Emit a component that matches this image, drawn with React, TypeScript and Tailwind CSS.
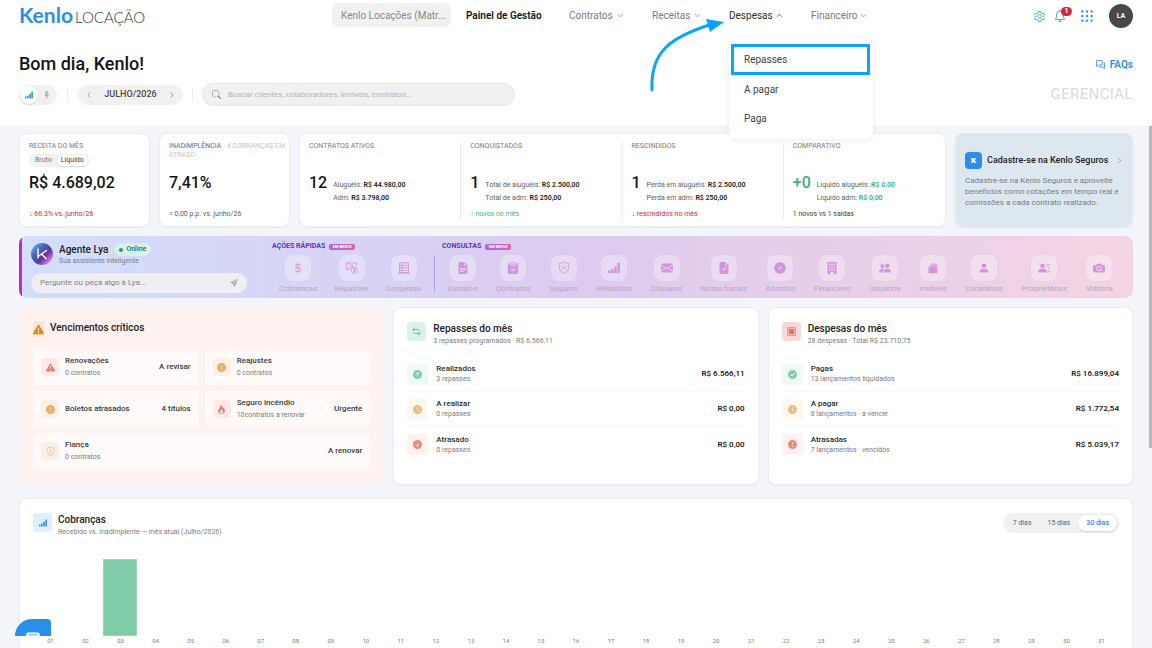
import React from "react";
import clsx from "clsx";
import type { IconType } from "react-icons";
import {
  BsArrowDownCircleFill,
  BsArrowUpCircleFill,
  BsBell,
  BsCameraFill,
  BsCheckCircleFill,
  BsChevronDown,
  BsChevronLeft,
  BsChevronRight,
  BsChevronUp,
  BsClipboardCheckFill,
  BsClockFill,
  BsCurrencyDollar,
  BsEnvelopeFill,
  BsExclamationCircleFill,
  BsExclamationTriangleFill,
  BsFileEarmarkCheckFill,
  BsFileEarmarkTextFill,
  BsFire,
  BsHouseFill,
  BsLightningFill,
  BsPatchCheckFill,
  BsPeopleFill,
  BsPersonFill,
  BsPersonLinesFill,
  BsSearch,
  BsSendFill,
  BsShieldCheck,
  BsShieldExclamation,
} from "react-icons/bs";

interface IconProps {
  className?: string;
  fill?: string;
}

const BarsIcon = ({ className, fill = "currentColor" }: IconProps) => (
  <svg viewBox="0 0 16 16" className={className} fill={fill}>
    <rect x="0" y="11" width="3.200" height="4" rx="0.8" />
    <rect x="4.200" y="9" width="3.200" height="6" rx="0.8" />
    <rect x="8.400" y="5.500" width="3.200" height="9.500" rx="0.8" />
    <rect x="12.600" y="1" width="3.200" height="14" rx="0.8" />
  </svg>
);

const BuildingIcon = ({ className, fill = "currentColor" }: IconProps) => (
  <svg viewBox="0 0 16 16" className={className} fill={fill} fillRule="evenodd">
    <path d="M2 0h12v16h-4v-3H6v3H2zM4 2v2h2V2zm3 0v2h2V2zm3 0v2h2V2zM4 5.500v2h2v-2zm3 0v2h2v-2zm3 0v2h2v-2zM4 9v2h2V9zm3 0v2h2V9zm3 0v2h2V9z" />
  </svg>
);

const MoneyIcon = ({ className, fill = "currentColor" }: IconProps) => (
  <svg viewBox="0 0 16 16" className={className} fill="none" stroke={fill} strokeWidth="1.1">
    <path d="M6 9.500H.8V1.200h13.500v3.500M.8 3.500 3 1.200M14.300 3.500 12 1.200M.8 7.500 3 9.500" />
    <circle cx="7" cy="5.200" r="1.800" />
    <circle cx="11.200" cy="10.800" r="4.200" />
    <path d="M12.700 9.300c-.8-.8-2.800-.6-2.800.5 0 1.400 2.800.8 2.800 2.100 0 1-2 1.300-2.900.4M11.300 8v5.600" />
  </svg>
);

const ListIcon = ({ className, fill = "currentColor" }: IconProps) => (
  <svg viewBox="0 0 16 16" className={className} fill="none" stroke={fill} strokeWidth="1.200">
    <path d="M2 1h12v13H2zM0 15h16M2 4.300h12M2 7.600h12M2 11h12M5.200 1v13" />
  </svg>
);

const SwapIcon = ({ className }: IconProps) => (
  <svg viewBox="0 0 16 16" className={className} fill="none" stroke="currentColor" strokeWidth="1.600">
    <path d="M4.500 1.500 1.500 4.500l3 3M1.500 4.500h9a3 3 0 0 1 2.500 2M11.500 8.500l3 3-3 3M14.500 11.500h-9a3 3 0 0 1-2.500-2" />
  </svg>
);

const SafeIcon = ({ className }: IconProps) => (
  <svg viewBox="0 0 16 16" className={className} fill="none" stroke="currentColor" strokeWidth="1.600">
    <rect x="1.500" y="1.500" width="13" height="13" />
    <rect x="4.500" y="4.500" width="7" height="7" fill="currentColor" />
  </svg>
);

const GearIcon = ({ className }: IconProps) => (
  <svg viewBox="0 0 24 24" className={className} fill="none" stroke="currentColor" strokeWidth="1.800" strokeLinejoin="round">
    <path d="M9.500 1h5l.7 3.200 2 1.200 3.100-1 2.500 4.300-2.400 2.200v2.200l2.400 2.200-2.500 4.300-3.100-1-2 1.200-.7 3.200h-5l-.7-3.200-2-1.200-3.100 1-2.500-4.300 2.400-2.200v-2.200L1.200 8.700l2.500-4.300 3.100 1 2-1.200z" />
    <circle cx="12" cy="12" r="4" />
  </svg>
);

const DotsIcon = ({ className }: IconProps) => (
  <svg viewBox="0 0 12 12" className={className} fill="currentColor">
    {[1.4, 6, 10.6].map((y) =>
      [1.4, 6, 10.6].map((x) => <circle key={`${x}-${y}`} cx={x} cy={y} r="1.200" />)
    )}
  </svg>
);

const ChatIcon = ({ className }: IconProps) => (
  <svg viewBox="0 0 16 16" className={className} fill="none" stroke="currentColor" strokeWidth="1.500" strokeLinejoin="round">
    <path d="M1 1h10v8H4.500L1 11.500zM13.500 5H15v10l-3-2.500H6.500V11" />
  </svg>
);

const LyaAvatar = () => (
  <svg viewBox="0 0 22 22" className="size-[22px] shrink-0" aria-hidden="true">
    <defs>
      <linearGradient id="lya-avatar" x1="0" y1="0" x2="1" y2="1">
        <stop offset="0%" stopColor="#7cc4ff" />
        <stop offset="35%" stopColor="#4a63b8" />
        <stop offset="60%" stopColor="#5b3796" />
        <stop offset="85%" stopColor="#d77bff" />
      </linearGradient>
    </defs>
    <circle cx="11" cy="11" r="11" fill="url(#lya-avatar)" />
    <path d="M7 6v9M15.500 7.500 7 13.500M10.500 11l4.500 4.500" stroke="#fff" strokeWidth="1.400" fill="none" strokeLinecap="round" />
  </svg>
);

const menuItems = ["Repasses", "A pagar", "Paga"];

const contractStats = [
  {
    label: "CONTRATOS ATIVOS",
    value: "12",
    lines: [["Aluguéis:", "R$ 44.980,00"], ["Adm:", "R$ 3.798,00"]],
    note: "",
    noteClass: "",
  },
  {
    label: "CONQUISTADOS",
    value: "1",
    lines: [["Total de aluguéis:", "R$ 2.500,00"], ["Total de adm:", "R$ 250,00"]],
    note: "↑ novos no mês",
    noteClass: "text-[#3dae82]",
  },
  {
    label: "RESCINDIDOS",
    value: "1",
    lines: [["Perda em aluguéis:", "R$ 2.500,00"], ["Perda em adm:", "R$ 250,00"]],
    note: "↓ rescindidos no mês",
    noteClass: "text-[#d3263f]",
  },
  {
    label: "COMPARATIVO",
    value: "+0",
    positive: true,
    lines: [["Líquido aluguéis:", "R$ 0,00"], ["Líquido adm:", "R$ 0,00"]],
    note: "1 novos vs 1 saídas",
    noteClass: "text-[#3c3c3c]",
  },
];

type AnyIcon = IconType | React.ComponentType<IconProps>;

const quickActions: { label: string; icon: AnyIcon }[] = [
  { label: "Cobranças", icon: BsCurrencyDollar },
  { label: "Repasses", icon: MoneyIcon },
  { label: "Despesas", icon: ListIcon },
];

const queries: { label: string; icon: AnyIcon }[] = [
  { label: "Extratos", icon: BsFileEarmarkTextFill },
  { label: "Contratos", icon: BsClipboardCheckFill },
  { label: "Seguros", icon: BsShieldCheck },
  { label: "Relatórios", icon: BarsIcon },
  { label: "Disparos", icon: BsEnvelopeFill },
  { label: "Notas fiscais", icon: BsFileEarmarkCheckFill },
  { label: "Acordos", icon: BsPatchCheckFill },
  { label: "Financeiro", icon: BuildingIcon },
  { label: "Usuários", icon: BsPeopleFill },
  { label: "Imóveis", icon: BsHouseFill },
  { label: "Locatários", icon: BsPersonFill },
  { label: "Proprietários", icon: BsPersonLinesFill },
  { label: "Vistoria", icon: BsCameraFill },
];

const dueItems = [
  { title: "Renovações", sub: "0 contratos", tag: "A revisar", icon: BsExclamationTriangleFill, tone: "bg-[#fde9e8] text-[#e37a70]" },
  { title: "Reajustes", sub: "0 contratos", tag: "", icon: BsExclamationCircleFill, tone: "bg-[#fcf0e6] text-[#e6b066]" },
  { title: "Boletos atrasados", sub: "", tag: "4 títulos", icon: BsExclamationCircleFill, tone: "bg-[#fcf0e6] text-[#e6b066]" },
  { title: "Seguro incêndio", sub: "10contratos a renovar", tag: "Urgente", icon: BsFire, tone: "bg-[#fde9e8] text-[#e37a70]" },
  { title: "Fiança", sub: "0 contratos", tag: "A renovar", icon: BsShieldExclamation, tone: "bg-[#fcf0e6] text-[#e9b48c]", wide: true },
];

const green = "bg-[#f0faf5] text-[#84cbaa]";
const amber = "bg-[#fef7ef] text-[#e9bd83]";
const red = "bg-[#fef1f0] text-[#e88a80]";

const transfers = [
  { title: "Realizados", sub: "3 repasses", value: "R$ 6.566,11", icon: BsArrowUpCircleFill, tone: green },
  { title: "A realizar", sub: "0 repasses", value: "R$ 0,00", icon: BsClockFill, tone: amber },
  { title: "Atrasado", sub: "0 repasses", value: "R$ 0,00", icon: BsArrowDownCircleFill, tone: red },
];

const expenses = [
  { title: "Pagas", sub: "13 lançamentos liquidados", value: "R$ 16.899,04", icon: BsCheckCircleFill, tone: green },
  { title: "A pagar", sub: "8 lançamentos · a vencer", value: "R$ 1.772,54", icon: BsClockFill, tone: amber },
  { title: "Atrasadas", sub: "7 lançamentos · vencidos", value: "R$ 5.039,17", icon: BsExclamationCircleFill, tone: red },
];

const chartData = Array.from({ length: 31 }, (_, i) => ({
  day: String(i + 1).padStart(2, "0"),
  received: i === 2 ? 100 : 0,
}));

const NavItem = ({ label, className }: { label: string; className: string }) => (
  <button className={clsx("flex items-center justify-between text-[#7b7b7b]", className)}>
    {label}
    <BsChevronDown className="size-[7px]" />
  </button>
);

const DespesasMenu = () => (
  <div className="relative w-[54px]">
    <button aria-expanded="true" className="flex w-full items-center justify-between text-[#2b2b2b]">
      Despesas
      <BsChevronUp className="size-[7px]" />
    </button>
    <div className="absolute top-[30px] left-0 z-20 w-36 rounded-lg bg-white pt-[6px] pr-[3px] pb-[6px] pl-[2px] shadow-[0_1px_6px_rgba(0,0,0,0.08)]">
      {menuItems.map((item, i) => (
        <a
          key={item}
          href="#"
          className={clsx(
            "flex items-center text-[#3f3f3f]",
            i === 0 ? "h-[31px] border-3 border-[#08a4ff] px-[10px]" : "h-[29px] px-[13px]"
          )}
        >
          {item}
        </a>
      ))}
    </div>
    <svg viewBox="0 0 76 76" className="absolute top-[10px] -left-20 z-30 size-[76px]" fill="none">
      <path d="M3 72C1 32 24 19 60 7" stroke="#08a4ff" strokeWidth="3" strokeLinecap="round" />
      <path d="M57 1l18 3-14 10z" fill="#08a4ff" />
    </svg>
  </div>
);

const Header = () => (
  <header className="relative z-10 bg-white px-[19px]">
    <div className="flex h-8 items-center">
      <a href="#" className="flex w-[313px] shrink-0 items-baseline gap-[2px]">
        <span className="font-['Lato'] text-[21px] leading-6 font-bold text-[#2b8fe8]">Kenlo</span>
        <span className="font-['Lato'] text-[15px] leading-6 font-light text-[#3a3a3a]">LOCAÇÃO</span>
      </a>
      <nav className="flex h-[30px] items-center gap-7 self-start text-[10px]">
        <button className="-mr-[13px] h-6 w-[119px] rounded-md bg-[#f1f1f1] pl-[9px] text-left whitespace-nowrap text-[#8a8a8a]">
          Kenlo Locações (Matr...
        </button>
        <a href="#" className="w-[75px] font-semibold whitespace-nowrap text-[#161616]">Painel de Gestão</a>
        <NavItem label="Contratos" className="w-[55px]" />
        <NavItem label="Receitas" className="w-[49px]" />
        <DespesasMenu />
        <NavItem label="Financeiro" className="w-14" />
      </nav>
      <div className="ml-auto flex items-center text-[#2b8fe8]">
        <button aria-label="Configurações"><GearIcon className="size-[11px]" /></button>
        <button aria-label="Notificações" className="relative ml-[9px]">
          <BsBell className="size-3" />
          <span className="absolute -top-[3px] left-[7px] flex h-[9px] w-[11px] items-center justify-center rounded-full bg-[#d9243a] text-[7px] font-bold text-white">1</span>
        </button>
        <button aria-label="Aplicativos" className="ml-[15px]"><DotsIcon className="size-3" /></button>
        <button className="ml-4 size-6 rounded-full bg-[#484848] text-[7px] font-bold text-white">LA</button>
      </div>
    </div>

    <div className="flex items-center justify-between pt-[20px]">
      <h1 className="text-[18px] leading-6 font-medium text-[#141414]">Bom dia, Kenlo!</h1>
      <a href="#" className="flex items-center gap-[5px] text-[10px] font-semibold text-[#2b8fe8]">
        <ChatIcon className="size-[9px]" />
        FAQs
      </a>
    </div>

    <div className="flex items-center pt-[7px] pb-[19px]">
      <div className="flex h-5 items-center rounded-full bg-[#f1f1f1] p-px text-[#b5b5b5]">
        <button aria-label="Gráficos" className="flex size-[18px] items-center justify-center rounded-full bg-white text-[#2b8fe8] shadow-sm">
          <BarsIcon className="size-2" />
        </button>
        <button aria-label="Atalhos" className="flex size-[18px] items-center justify-center">
          <BsLightningFill className="size-2" />
        </button>
      </div>
      <span className="mx-[10px] h-3 w-px bg-[#ececec]" />
      <div className="flex h-5 w-[105px] items-center justify-between rounded-full bg-[#f1f1f1] px-2 text-[#7b7b7b]">
        <button aria-label="Mês anterior"><BsChevronLeft className="size-[6px]" /></button>
        <span className="text-[9px] font-medium text-[#4a4a4a]">JULHO/2026</span>
        <button aria-label="Próximo mês"><BsChevronRight className="size-[6px]" /></button>
      </div>
      <span className="mx-[9px] h-3 w-px bg-[#ececec]" />
      <label className="flex h-[23px] w-[313px] items-center gap-[7px] rounded-full border border-[#e6e6e6] bg-[#f1f1f1] px-[9px] text-[#7b7b7b]">
        <BsSearch className="size-[9px] shrink-0" />
        <input
          type="search"
          aria-label="Buscar"
          placeholder="Buscar clientes, colaboradores, imóveis, contratos..."
          className="w-full bg-transparent text-[8px] outline-none placeholder:text-[#b4b4b4]"
        />
      </label>
      <span className="ml-auto text-[15px] tracking-wide text-[#dadada]">GERENCIAL</span>
    </div>
  </header>
);

const cardClass = "rounded-lg border border-[#eceef2] bg-white shadow-[0_1px_2px_rgba(0,0,0,0.05)]";

const StatCards = () => (
  <section className="grid grid-cols-[131fr_131fr_647fr_178fr] gap-[9px]">
    <div className={clsx(cardClass, "flex min-h-[94px] flex-col pt-2 pb-[6px] pl-[9px]")}>
      <div className="h-[31px]">
        <p className="text-[7px] leading-[9px] text-[#7b7b7b]">RECEITA DO MÊS</p>
        <div className="mt-[3px] flex h-[13px] w-fit items-center rounded-full bg-[#f1f1f1] px-px text-[7px] leading-[11px]">
          <button className="px-[5px] text-[#7b7b7b]">Bruto</button>
          <button className="rounded-full bg-white px-1 text-[#3c3c3c] shadow-sm">Líquido</button>
        </div>
      </div>
      <p className="text-[16px] leading-5 font-medium text-[#141414]">R$ 4.689,02</p>
      <p className="mt-auto text-[7px] leading-3 text-[#d3263f]">↓ 66.3% vs. junho/26</p>
    </div>

    <div className={clsx(cardClass, "flex min-h-[94px] flex-col pt-2 pb-[6px] pl-[9px]")}>
      <p className="h-[31px] text-[7px] leading-[9px] text-[#c4c4c4]">
        <span className="text-[#6b6b6b]">INADIMPLÊNCIA</span> · 4 COBRANÇAS EM ATRASO
      </p>
      <p className="text-[16px] leading-5 font-medium text-[#141414]">7,41%</p>
      <p className="mt-auto text-[7px] leading-3 text-[#5e5e5e]">= 0,00 p.p. vs. junho/26</p>
    </div>

    <div className={clsx(cardClass, "grid grid-cols-4 divide-x divide-[#ececec] pt-2 pb-[6px]")}>
      {contractStats.map((stat) => (
        <div key={stat.label} className="flex flex-col pl-[9px]">
          <p className="h-[31px] text-[7px] leading-[9px] text-[#7b7b7b]">{stat.label}</p>
          <div className="flex gap-[6px]">
            <span className={clsx("text-[16px] leading-5 font-medium", stat.positive ? "text-[#3dae82]" : "text-[#141414]")}>
              {stat.value}
            </span>
            <div className="pt-[6px] text-[7px] leading-[13px] whitespace-nowrap text-[#5e5e5e]">
              {stat.lines.map(([label, value]) => (
                <p key={label}>
                  {label}{" "}
                  <span className={clsx("font-semibold", stat.positive ? "text-[#3dae82]" : "text-[#222222]")}>{value}</span>
                </p>
              ))}
            </div>
          </div>
          <p className={clsx("mt-auto h-3 text-[7px] leading-3", stat.noteClass)}>{stat.note}</p>
        </div>
      ))}
    </div>

    <a href="#" className="flex flex-col rounded-lg border border-[#e2e8ee] bg-[#dde7ef] px-[9px] pt-[18px] shadow-[0_1px_2px_rgba(0,0,0,0.05)]">
      <span className="flex items-center text-[9px] font-medium whitespace-nowrap text-[#222222]">
        <span className="mr-[5px] flex size-[17px] items-center justify-center rounded-[4px] bg-[#2b8fe8] text-[8px] font-black text-white">K</span>
        Cadastre-se na Kenlo Seguros
        <BsChevronRight className="ml-auto size-[7px] text-[#7b7b7b]" />
      </span>
      <span className="mt-[6px] -mr-1 text-[8px] leading-[11px] text-[#767c82]">
        Cadastre-se na Kenlo Seguros e aproveite benefícios como cotações em tempo real e comissões a cada contrato realizado.
      </span>
    </a>
  </section>
);

const SoonBadge = () => (
  <span className="flex h-[6px] w-[26px] items-center justify-center rounded-[2px] bg-linear-to-r from-[#a06be8] to-[#e35fa8] text-[4px] leading-[6px] font-bold text-white">
    EM BREVE
  </span>
);

const Tile = ({ label, icon: Icon }: { label: string; icon: AnyIcon }) => (
  <button className="flex flex-col items-center text-[8px] leading-[9px] whitespace-nowrap text-[#b7a8bd]">
    <span className="mb-[3px] flex size-[26px] items-center justify-center rounded-lg bg-white/30">
      <Icon className="size-3" fill="url(#lya-icons)" />
    </span>
    {label}
  </button>
);

const AgentBanner = () => (
  <section className="flex h-[62px] overflow-hidden rounded-lg bg-linear-to-r from-[#d2dffb] via-[#dccaef] to-[#f4d4e3]">
    <svg className="absolute size-0" aria-hidden="true">
      <linearGradient id="lya-icons" x1="0" y1="0" x2="1" y2="1">
        <stop offset="0%" stopColor="#c596e6" />
        <stop offset="100%" stopColor="#e295d2" />
      </linearGradient>
    </svg>
    <span className="w-[3px] shrink-0 bg-[#c026d3]" />
    <div className="flex w-[237px] shrink-0 flex-col gap-[7px] border-r border-white/20 pt-[7px] pr-[11px] pl-[9px]">
      <div className="flex gap-[6px]">
        <LyaAvatar />
        <div>
          <div className="flex items-center gap-[6px]">
            <h2 className="text-[10px] leading-[13px] font-medium text-[#222222]">Agente Lya</h2>
            <span className="flex h-[13px] items-center gap-[3px] rounded-full bg-[#d7f1e8] px-[5px] text-[7px] font-medium text-[#2c6e55]">
              <span className="size-1 rounded-full bg-[#22a06b]" />
              Online
            </span>
          </div>
          <p className="text-[7px] leading-[10px] text-[#7d7d8a]">Sua assistente inteligente</p>
        </div>
      </div>
      <label className="flex h-5 items-center rounded-full bg-[#efeff1] px-[9px] text-[#b0b0b0]">
        <input
          aria-label="Mensagem para Lya"
          placeholder="Pergunte ou peça algo à Lya..."
          className="w-full bg-transparent text-[8px] outline-none placeholder:text-[#858585]"
        />
        <BsSendFill className="size-2 shrink-0" />
      </label>
    </div>
    <div className="flex w-[175px] shrink-0 flex-col gap-1 pt-[6px] pr-[13px] pl-[13px]">
      <div className="flex items-center gap-1 text-[7px] leading-[9px] font-bold whitespace-nowrap text-[#5b34a8]">
        AÇÕES RÁPIDAS <SoonBadge />
      </div>
      <div className="flex justify-between pl-[7px]">
        {quickActions.map((item) => (
          <Tile key={item.label} {...item} />
        ))}
      </div>
    </div>
    <span className="mt-[19px] h-[37px] w-px bg-[#b6a3dd]" />
    <div className="flex flex-1 flex-col gap-1 pt-[6px] pr-[20px] pl-[7px]">
      <div className="flex items-center gap-1 text-[7px] leading-[9px] font-bold whitespace-nowrap text-[#5b34a8]">
        CONSULTAS <SoonBadge />
      </div>
      <div className="flex justify-between pl-[6px]">
        {queries.map((item) => (
          <Tile key={item.label} {...item} />
        ))}
      </div>
    </div>
  </section>
);

const CriticalDues = () => (
  <div className="rounded-lg bg-[#fef2f1] p-[14px]">
    <div className="flex h-[18px] items-start gap-[6px]">
      <span className="flex h-4 w-[11px] items-center justify-center rounded-[3px] bg-[#f8e5cf] text-[#dd8f26]">
        <BsExclamationTriangleFill className="size-[11px] shrink-0" />
      </span>
      <h2 className="text-[10px] leading-[14px] font-medium text-[#222222]">Vencimentos críticos</h2>
    </div>
    <div className="mt-[10px] grid grid-cols-2 gap-x-[6px] gap-y-[6px]">
      {dueItems.map(({ icon: Icon, ...item }) => (
        <a
          key={item.title}
          href="#"
          className={clsx(
            "flex h-9 items-center gap-[6px] rounded-[4px] bg-white/65 px-2 text-[8px] leading-3 font-medium whitespace-nowrap text-[#3a3a3a]",
            item.wide && "col-span-2"
          )}
        >
          <span className={clsx("flex size-[18px] items-center justify-center rounded-[4px]", item.tone)}>
            <Icon className="size-[9px]" />
          </span>
          <span className="flex flex-col">
            {item.title}
            {item.sub && <span className="text-[7px] font-normal text-[#7b7b7b]">{item.sub}</span>}
          </span>
          <span className="ml-auto">{item.tag}</span>
        </a>
      ))}
    </div>
  </div>
);

interface MonthCardProps {
  title: string;
  subtitle: string;
  icon: React.ReactNode;
  rows: typeof transfers;
}

const MonthCard = ({ title, subtitle, icon, rows }: MonthCardProps) => (
  <div className={clsx(cardClass, "min-h-[178px] px-[13px] py-[14px]")}>
    <div className="flex gap-[7px]">
      {icon}
      <div>
        <h2 className="text-[10px] leading-[13px] font-medium text-[#222222]">{title}</h2>
        <p className="text-[7px] leading-3 text-[#7b7b7b]">{subtitle}</p>
      </div>
    </div>
    <div className="mt-[10px] divide-y divide-[#f8f8f8]">
      {rows.map(({ icon: Icon, ...row }) => (
        <div key={row.title} className="flex h-[35px] items-center gap-2">
          <span className={clsx("flex size-[21px] items-center justify-center rounded-[4px]", row.tone)}>
            <Icon className="size-[9px]" />
          </span>
          <div className="leading-[11px]">
            <p className="text-[8px] font-medium text-[#2c2c2c]">{row.title}</p>
            <p className="text-[7px] text-[#7b7b7b]">{row.sub}</p>
          </div>
          <span className="ml-auto text-[8px] font-semibold text-[#222222]">{row.value}</span>
        </div>
      ))}
    </div>
  </div>
);

const ChargesChart = () => (
  <section className={clsx(cardClass, "px-[13px] py-[14px]")}>
    <div className="flex items-start gap-[6px]">
      <span className="flex size-[19px] items-center justify-center rounded-[4px] bg-[#e0effc] text-[#2b8fe8]">
        <BarsIcon className="size-2" />
      </span>
      <div>
        <h2 className="text-[10px] leading-[13px] font-medium text-[#222222]">Cobranças</h2>
        <p className="text-[7px] leading-3 text-[#7b7b7b]">Recebido vs. inadimplente — mês atual (Julho/2026)</p>
      </div>
      <div className="ml-auto flex h-5 items-center rounded-full bg-[#f1f1f1] px-[2px] text-[7px] leading-4 text-[#5e5e5e]">
        <button className="px-2">7 dias</button>
        <button className="px-2">15 dias</button>
        <button className="rounded-full bg-white px-2 font-medium text-[#2b8fe8] shadow-sm">30 dias</button>
      </div>
    </div>
    <div className="mt-[21px] grid grid-cols-[repeat(31,minmax(0,1fr))]">
      {chartData.map((item) => (
        <div key={item.day}>
          <div className="flex h-[77px] items-end pr-px">
            <div
              className={clsx("w-full bg-[#7fcba8]", item.received > 0 && "border border-[#9ad8bc]")}
              style={{ height: `${item.received}%` }}
            />
          </div>
          <p className="text-center text-[6px] leading-[10px] text-[#7b7b7b]">{item.day}</p>
        </div>
      ))}
    </div>
  </section>
);

export default function App() {
  return (
    <div className="relative h-screen overflow-hidden bg-[#f4f5fa] font-['Roboto',sans-serif]">
      <Header />
      <main className="flex flex-col gap-[9px] px-[19px] pt-2">
        <StatCards />
        <AgentBanner />
        <section className="mb-1 grid grid-cols-3 gap-[9px]">
          <CriticalDues />
          <MonthCard
            title="Repasses do mês"
            subtitle="3 repasses programados · R$ 6.566,11"
            rows={transfers}
            icon={
              <span className="flex size-[19px] items-center justify-center rounded-[4px] bg-[#d7f5e6] text-[#5cbf92]">
                <SwapIcon className="size-[9px]" />
              </span>
            }
          />
          <MonthCard
            title="Despesas do mês"
            subtitle="28 despesas · Total R$ 23.710,75"
            rows={expenses}
            icon={
              <span className="flex size-[19px] items-center justify-center rounded-[4px] bg-[#f9d8d6] text-[#e07268]">
                <SafeIcon className="size-[9px]" />
              </span>
            }
          />
        </section>
        <ChargesChart />
      </main>

      {/* Scroll thumb */}
      <div className="absolute top-[126px] right-0 h-[322px] w-[3px] bg-[#b9b9bb]" />

      {/* Support chat */}
      <button
        aria-label="Abrir chat"
        className="absolute bottom-3 left-[15px] flex h-[17px] w-9 items-end justify-center overflow-hidden rounded-tl-[18px] rounded-tr-[4px] bg-[#2b8fe8]"
      >
        <svg viewBox="0 0 14 4" className="h-1 w-[14px]">
          <path d="M0 4V3a2.500 2.500 0 0 1 2.500-2.500h9A2.500 2.500 0 0 1 14 3v1z" fill="#fff" />
          <path d="M2.500 2.800h9" stroke="#2b8fe8" strokeWidth="0.800" />
        </svg>
      </button>
    </div>
  );
}
